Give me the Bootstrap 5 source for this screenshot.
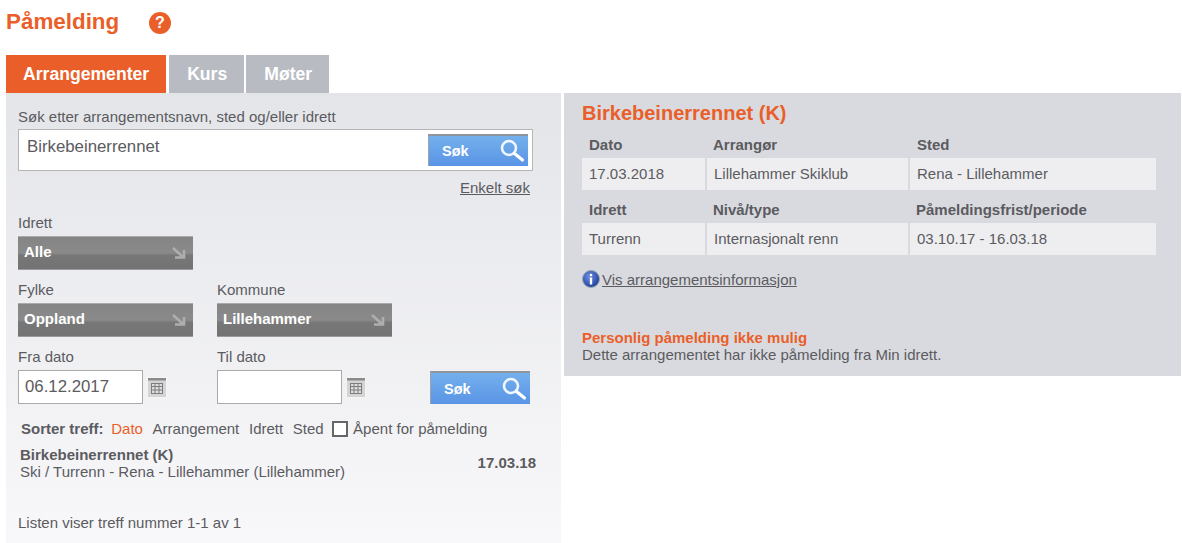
<!DOCTYPE html>
<html lang="no"><head><meta charset="utf-8"><title>Påmelding</title>
<link rel="stylesheet" href="https://cdn.jsdelivr.net/npm/bootstrap@5.3.0/dist/css/bootstrap.min.css">
<style>
html,body{height:543px;overflow:hidden}
body{font-family:"Liberation Sans",Arial,sans-serif;font-size:15px;line-height:17px;color:#5b5b60;background:#fff}
a{color:inherit}
.page-wrap{width:1182px;padding:0 1px 0 6px}
.head-row{height:55px;padding-top:7px;align-items:flex-start}
.page-title{font-size:22.4px;font-weight:700;line-height:30px;color:#ea5f29;margin:0;width:143px}
.help-dot{width:22px;height:22px;border-radius:50%;background:#ea5f29;color:#fff;font-size:16px;font-weight:700;line-height:22px;text-align:center;margin-top:5px}
.tab-row{height:38px;gap:3px}
.tab-item{display:block;background:#b9bbc2;color:#fff;font-size:17.6px;font-weight:700;line-height:38px;padding:0 17px 0 18px;text-decoration:none}
.tab-item.on{background:#ea5f29;padding:0 17px}
.tab-gap{margin-left:-1px}
.panels{gap:3px;align-items:flex-start}
.left-panel{width:555px;height:450px;background:linear-gradient(#e4e5e9,#f8f8fa);padding:15px 0 0 12px}
.right-panel{width:617px;height:283px;background:#d9dadf;padding:8px 18px 0}
.field-label{display:block;margin:0;line-height:17px}
.search-box{width:515px;height:42px;border:1px solid #b5b5b7;background:#fff;margin-top:4px;padding:4px 4px 0 8px;justify-content:space-between}
.search-text{border:0;outline:0;background:none;font-size:16.8px;color:#5b5b60;height:24px;padding:2px 0 0;width:380px;line-height:22px}
.search-go{width:100px;height:32px;border:0;border-top:2px solid #8f959e;border-left:1px solid #9da3ad;background:linear-gradient(#74b0ec,#5a94e6);color:#fff;font-weight:700;font-size:14.5px;padding:2px 2px 0 13px;border-radius:0;align-items:center;justify-content:space-between}
.search-go svg{display:block}
.simple-link{width:512px;text-align:right;margin-top:8px;height:17px}
.pick-row{gap:24px}
.pick-cell{width:175px}
.pick-box{height:34px;width:175px;background:linear-gradient(#858585 0,#8a8a8a 50%,#777 58%,#737373 100%);border-top:1px solid #a9a9a9;border-bottom:1px solid #9b9b9b;color:#fff;font-weight:700;font-size:15px;padding:0 7px 4px 6px;margin-top:5px;justify-content:space-between;align-items:center}
.pick-box svg{margin-top:4px}
.gap-a{margin-top:18px}.gap-b{margin-top:11px}.gap-c{margin-top:11px}
.date-in{width:125px;height:34px;border:1px solid #aaa;background:#fff;font-size:16.8px;color:#5b5b60;padding:0 6px;border-radius:0;outline:0}
.date-cell{width:175px}
.date-line{margin-top:5px;gap:4px;align-items:center}
.cal-ico{display:block}
.go-low{margin-left:14px;margin-top:23px;height:33px}
.sort-row{margin:16px 0 0 3px;gap:9.7px;line-height:17px;align-items:center}
.sort-row b{margin-right:-2px}
.sort-now{color:#ea5f29}
.tick-box{width:16px;height:16px;border:2px solid #666;background:#fff;margin:1px -5px 0 -1px;flex:none}
.hit-row{width:516px;margin:9px 0 0 2px;justify-content:space-between}
.hit-date{font-weight:700;padding-top:8px}
.count-line{margin-top:34px}
.event-title{font-size:20px;font-weight:700;line-height:24px;color:#ea5f29;margin:0 0 13px}
.info-grid{display:grid;grid-template-columns:123px 201px 246px;width:574px;column-gap:2px}
.info-head{font-weight:700;height:20px;padding:0 7px;line-height:13px}
.info-head.head-in{padding-left:6px}
.info-val{background:#eeeef1;height:32px;line-height:32px;padding:0 7px;margin-bottom:13px}
.info-link{margin-top:2px;gap:2px;align-items:center;height:18px}
.notice-t{margin:41px 0 0;font-weight:700;color:#ea5f29;line-height:17px}
.notice-b{margin:0;line-height:17px}
</style></head><body>
<div class="page-wrap">
<div class="head-row d-flex"><h1 class="page-title">Påmelding</h1><div class="help-dot">?</div></div>
<nav class="tab-row d-flex"><a class="tab-item on" href="#">Arrangementer</a><a class="tab-item" href="#">Kurs</a><a class="tab-item tab-gap" href="#">Møter</a></nav>
<div class="panels d-flex">
<section class="left-panel">
<label class="field-label">Søk etter arrangementsnavn, sted og/eller idrett</label>
<div class="search-box d-flex"><input class="search-text" value="Birkebeinerrennet"><button class="search-go d-flex btn"><span>Søk</span><svg width="26" height="26" viewBox="0 0 26 26" fill="none" stroke="#fff"><circle cx="9" cy="9" r="7" stroke-width="2.600" stroke-opacity=".9"/><path d="M14.500 14.500l8 6.500" stroke-width="3.200" stroke-linecap="round"/></svg></button></div>
<div class="simple-link"><a href="#">Enkelt søk</a></div>
<label class="field-label gap-a">Idrett</label>
<div class="pick-box d-flex"><span>Alle</span><svg width="14" height="12" viewBox="0 0 14 12" fill="none" stroke="#aeaeae" stroke-width="2.600"><path d="M1 1l10 9M3 10.500h9V3"/></svg></div>
<div class="pick-row d-flex gap-b">
<div class="pick-cell"><label class="field-label">Fylke</label><div class="pick-box d-flex"><span>Oppland</span><svg width="14" height="12" viewBox="0 0 14 12" fill="none" stroke="#aeaeae" stroke-width="2.600"><path d="M1 1l10 9M3 10.500h9V3"/></svg></div></div>
<div class="pick-cell"><label class="field-label">Kommune</label><div class="pick-box d-flex"><span>Lillehammer</span><svg width="14" height="12" viewBox="0 0 14 12" fill="none" stroke="#aeaeae" stroke-width="2.600"><path d="M1 1l10 9M3 10.500h9V3"/></svg></div></div>
</div>
<div class="d-flex gap-c pick-row">
<div class="date-cell"><label class="field-label">Fra dato</label><div class="date-line d-flex"><input class="date-in" value="06.12.2017"><svg class="cal-ico" width="20" height="21" viewBox="0 0 20 21"><rect x=".5" y=".5" width="19" height="20" fill="#d4d4d4" stroke="#f4f4f4"/><rect x="1" y="1" width="18" height="2.500" fill="#8a8a8a"/><rect x="4.500" y="6.500" width="11" height="10" fill="#dedede" stroke="#7d7d7d"/><path d="M8 6.500v10M12 6.500v10M4.500 9.500h11M4.500 13h11" stroke="#7d7d7d"/></svg></div></div>
<div class="date-cell"><label class="field-label">Til dato</label><div class="date-line d-flex"><input class="date-in"><svg class="cal-ico" width="20" height="21" viewBox="0 0 20 21"><rect x=".5" y=".5" width="19" height="20" fill="#d4d4d4" stroke="#f4f4f4"/><rect x="1" y="1" width="18" height="2.500" fill="#8a8a8a"/><rect x="4.500" y="6.500" width="11" height="10" fill="#dedede" stroke="#7d7d7d"/><path d="M8 6.500v10M12 6.500v10M4.500 9.500h11M4.500 13h11" stroke="#7d7d7d"/></svg></div></div>
<button class="search-go go-low d-flex btn"><span>Søk</span><svg width="26" height="26" viewBox="0 0 26 26" fill="none" stroke="#fff"><circle cx="9" cy="9" r="7" stroke-width="2.600" stroke-opacity=".9"/><path d="M14.500 14.500l8 6.500" stroke-width="3.200" stroke-linecap="round"/></svg></button>
</div>
<div class="sort-row d-flex"><b>Sorter treff:</b><span class="sort-now">Dato</span><span>Arrangement</span><span>Idrett</span><span>Sted</span><span class="tick-box"></span><span>Åpent for påmelding</span></div>
<div class="hit-row d-flex"><div><b>Birkebeinerrennet (K)</b><br>Ski / Turrenn - Rena - Lillehammer (Lillehammer)</div><div class="hit-date">17.03.18</div></div>
<div class="count-line">Listen viser treff nummer 1-1 av 1</div>
</section>
<section class="right-panel">
<h2 class="event-title">Birkebeinerrennet (K)</h2>
<div class="info-grid">
<div class="info-head">Dato</div><div class="info-head head-in">Arrangør</div><div class="info-head">Sted</div>
<div class="info-val">17.03.2018</div><div class="info-val">Lillehammer Skiklub</div><div class="info-val">Rena - Lillehammer</div>
<div class="info-head">Idrett</div><div class="info-head head-in">Nivå/type</div><div class="info-head head-in">Påmeldingsfrist/periode</div>
<div class="info-val">Turrenn</div><div class="info-val">Internasjonalt renn</div><div class="info-val">03.10.17 - 16.03.18</div>
</div>
<div class="info-link d-flex"><svg width="18" height="18" viewBox="0 0 18 18"><defs><radialGradient id="bl" cx=".4" cy=".35" r=".7"><stop offset="0" stop-color="#6d8fe0"/><stop offset="1" stop-color="#1c3a9a"/></radialGradient></defs><circle cx="9" cy="9" r="8.500" fill="url(#bl)" stroke="#9aa"/><circle cx="9" cy="5" r="1.300" fill="#fff"/><path d="M7.800 7.500h2.400v7H7.800z" fill="#fff"/></svg><a href="#">Vis arrangementsinformasjon</a></div>
<p class="notice-t">Personlig påmelding ikke mulig</p>
<p class="notice-b">Dette arrangementet har ikke påmelding fra Min idrett.</p>
</section>
</div></div>
<script src="https://cdn.jsdelivr.net/npm/bootstrap@5.3.0/dist/js/bootstrap.bundle.min.js"></script>
</body></html>
